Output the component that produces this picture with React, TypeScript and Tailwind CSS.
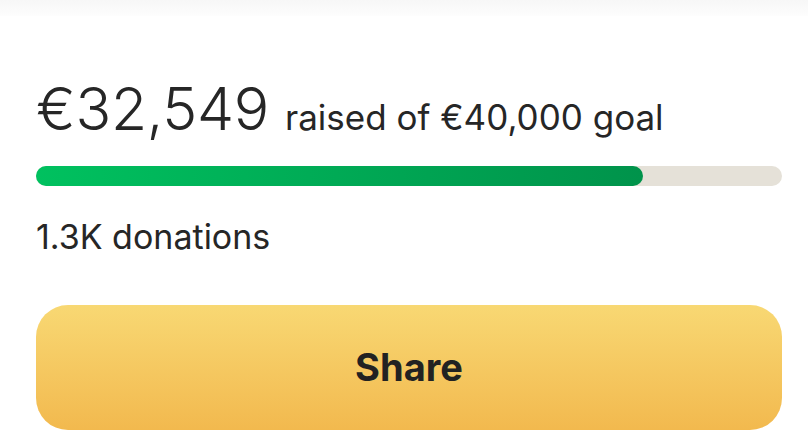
export default function App() {
  return (
    <div className="w-[808px] h-[444px] bg-white overflow-hidden" style={{ fontFamily: "Inter, 'Noto Sans', sans-serif" }}>
      <div className="h-4 bg-gradient-to-b from-[#f7f7f7] to-[#fdfdfd]" />
      <div className="pl-9 pr-[26px] pt-[63px]">
        <div className="flex h-[60px] items-baseline text-[#262626]">
          <span className="text-[59px] leading-none font-light tracking-[-0.3px]">€32,549</span>
          <span className="ml-4 text-[35px] leading-none">raised of €40,000 goal</span>
        </div>
        <div className="mt-[27px] h-5 w-full rounded-full bg-[#e5e1d8]">
          <div className="h-5 rounded-full bg-gradient-to-r from-[#00c15f] to-[#00934b]" style={{ width: "81.4%" }} />
        </div>
        <div className="mt-[34px] text-[34px] leading-none text-[#262626]">1.3K donations</div>
        <button className="mt-[51px] flex h-[125px] w-full items-center justify-center rounded-[32px] bg-gradient-to-b from-[#f8d873] to-[#f2b94e] text-[38px] font-bold text-[#222222]">
          Share
        </button>
      </div>
    </div>
  );
}
